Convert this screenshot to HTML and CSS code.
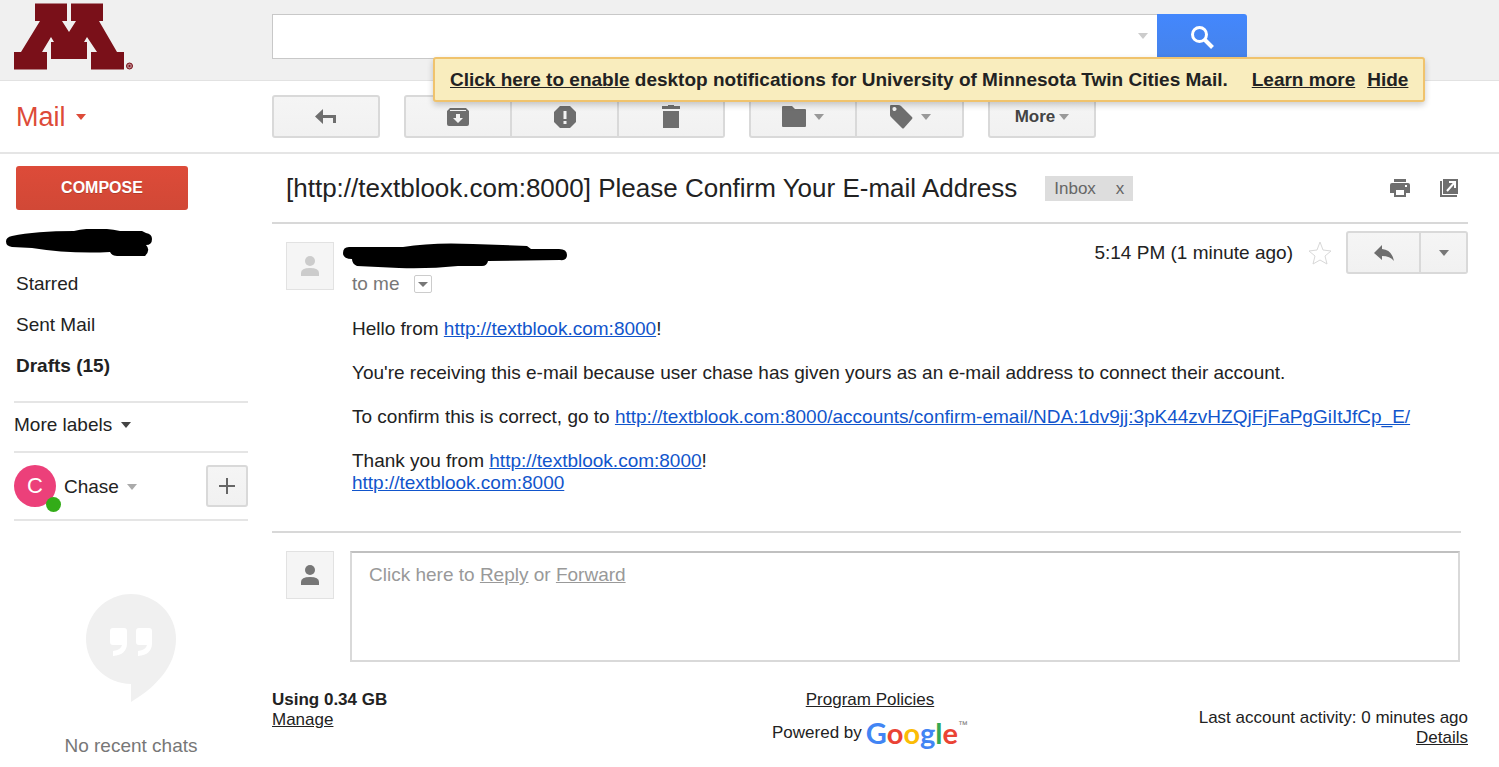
FILE: index.html
```html
<!DOCTYPE html>
<html lang="en">
<head>
<meta charset="utf-8">
<meta name="viewport" content="width=device-width, initial-scale=1">
<title>University of Minnesota Twin Cities Mail</title>
<link rel="stylesheet" href="styles.css">
</head>
<body>
<header class="topbar">
  <a class="brand" href="#" aria-label="University of Minnesota">
    <svg width="120" height="68" viewBox="0 0 120 68" aria-hidden="true">
      <path fill="#7a1019" d="M21 0.500h32v17.500h-5l7 11 7-11h-5V0.500h32v17.500h-4l18 31h7v17.500H77V49h6L73 34l-3 5h3v17H37V39h3l-3-5-9 15h5v17.500H0V49h7L26 18h-5z"/>
      <circle cx="115.500" cy="63" r="3" fill="#b98288" stroke="#7a1019"/>
      <circle cx="115.500" cy="63" r="1" fill="#7a1019"/>
    </svg>
  </a>
  <form class="search">
    <input class="search-input" type="text" aria-label="Search mail">
    <button class="search-options" type="button" aria-label="Search options"><span class="caret caret-light"></span></button>
    <button class="search-go" type="button" aria-label="Search">
      <svg width="24" height="24" viewBox="0 0 24 24" fill="none" stroke="#fff" aria-hidden="true"><circle cx="9.500" cy="9.500" r="7" stroke-width="3"/><path stroke-width="4" d="m14.500 14.500 8 8"/></svg>
    </button>
  </form>
  <div class="notice" role="status">
    <span><a href="#">Click here to enable</a> desktop notifications for University of Minnesota Twin Cities Mail.</span>
    <a class="notice-learn" href="#">Learn more</a>
    <a class="notice-hide" href="#">Hide</a>
  </div>
</header>

<div class="toolbar">
  <button class="app-switch" type="button">Mail <span class="caret caret-red"></span></button>
  <div class="actions">
    <div class="group">
      <button class="tool" type="button" aria-label="Back to inbox">
        <svg width="22" height="16" viewBox="0 0 22 16" aria-hidden="true"><path fill="#6e6e6e" d="M8 0v6h13v8h-3V9H8v6L0 7.500z"/></svg>
      </button>
    </div>
    <div class="group">
      <button class="tool" type="button" aria-label="Archive">
        <svg width="22" height="20" viewBox="0 0 22 20" aria-hidden="true"><path fill="#6e6e6e" fill-rule="evenodd" d="M3 1h16l3 3v13q0 2-2 2H2q-2 0-2-2V4zm0 2v1h16V3zm6 4v4H6l5 5 5-5h-3V7z"/></svg>
      </button>
      <button class="tool" type="button" aria-label="Report spam">
        <svg width="22" height="22" viewBox="0 0 22 22" aria-hidden="true"><path fill="#6e6e6e" d="M6 0h10l6 6v10l-6 6H6l-6-6V6z"/><path stroke="#f3f3f3" stroke-width="3" d="M11 5v8m0 2v3"/></svg>
      </button>
      <button class="tool" type="button" aria-label="Delete">
        <svg width="20" height="24" viewBox="0 0 20 24" aria-hidden="true"><path fill="#6e6e6e" d="M1 1h6V0h6v1h6v3H1zm1 5h16v17H2z"/></svg>
      </button>
    </div>
    <div class="group">
      <button class="tool" type="button" aria-label="Move to">
        <svg width="24" height="22" viewBox="0 0 24 22" aria-hidden="true"><path fill="#6e6e6e" d="M1 0h9l3 3h10q1 0 1 1v16q0 1-1 1H1q-1 0-1-1V1q0-1 1-1z"/></svg>
        <span class="caret caret-gray"></span>
      </button>
      <button class="tool" type="button" aria-label="Labels">
        <svg width="24" height="24" viewBox="0 0 24 24" aria-hidden="true"><path fill="#6e6e6e" fill-rule="evenodd" d="M2 0h7q2 0 3 1l11 11q1 1 0 2l-8 9q-1 1-2 0L2 12q-1-1-1-2V1q0-1 1-1zm3 2a2 2 0 1 0 1 4 2 2 0 0 0-1-4z"/></svg>
        <span class="caret caret-gray"></span>
      </button>
    </div>
    <div class="group">
      <button class="tool tool-more" type="button">More <span class="caret caret-gray"></span></button>
    </div>
  </div>
</div>

<div class="layout">
  <aside class="sidebar">
    <button class="compose" type="button">COMPOSE</button>
    <nav class="folders" aria-label="Folders">
      <a class="folder folder-hidden" href="#" aria-label="Inbox">
        <svg width="148" height="30" viewBox="0 0 148 30" aria-hidden="true"><path fill="#000" d="M6 7Q30 2 68 2 90-3 114 2h22l4 2q6 1 6 6 0 6-6 6 5 5-1 11h-28q-5 0-7-4-40 2-78-4L6 18q-6-1-6-5.500T6 7z"/></svg>
      </a>
      <a class="folder" href="#">Starred</a>
      <a class="folder" href="#">Sent Mail</a>
      <a class="folder folder-bold" href="#">Drafts (15)</a>
    </nav>
    <button class="more-labels" type="button">More labels <span class="caret caret-dark"></span></button>
    <div class="profile">
      <span class="face">C<span class="presence"></span></span>
      <button class="profile-name" type="button">Chase <span class="caret caret-soft"></span></button>
      <button class="add" type="button" aria-label="New conversation">
        <svg width="18" height="18" viewBox="0 0 18 18" aria-hidden="true"><path stroke="#666" stroke-width="2" d="M9 1v16M1 9h16"/></svg>
      </button>
    </div>
    <div class="chats">
      <svg width="90" height="108" viewBox="0 0 90 108" aria-hidden="true"><path fill="#f0f0f0" d="M45 0a45 45 0 0 1 45 45c0 27-20 48-45 63V90A45 45 0 0 1 45 0z"/><path fill="#fff" d="M27 34h11q3 0 3 3v12q0 12-14 13v-5q8-1 9-6h-9q-3 0-3-3V37q0-3 3-3zm26 0h10q3 0 3 3v12q0 12-14 13v-5q8-1 9-6h-8q-3 0-3-3V37q0-3 3-3z"/></svg>
      <p class="chats-text">No recent chats</p>
    </div>
  </aside>

  <main class="main">
    <div class="subject">
      <h1 class="subject-text">[http://textblook.com:8000] Please Confirm Your E-mail Address</h1>
      <span class="tag">Inbox <button class="tag-x" type="button" aria-label="Remove label Inbox">x</button></span>
      <div class="subject-tools">
        <button class="icon-btn" type="button" aria-label="Print">
          <svg width="22" height="20" viewBox="0 0 22 20" aria-hidden="true"><path fill="#6e6e6e" fill-rule="evenodd" d="M5 1h12v3H5zM3 5h16q2 0 2 2v8h-4v4H5v-4H1V7q0-2 2-2zm4 7v5h8v-5zm11-5h-2v2h2z"/></svg>
        </button>
        <button class="icon-btn" type="button" aria-label="Open in new window">
          <svg width="20" height="20" viewBox="0 0 20 20" aria-hidden="true"><path fill="#6e6e6e" d="M4 1h15v15H4z"/><path fill="none" stroke="#6e6e6e" stroke-width="2" d="M2 3v15h16"/><path fill="none" stroke="#fff" stroke-width="2" d="M10 4h6v6m0-6-8 9"/></svg>
        </button>
      </div>
    </div>

    <article class="message">
      <span class="avatar">
        <svg width="20" height="22" viewBox="0 0 20 22" aria-hidden="true"><g fill="#ccc"><circle cx="10" cy="6" r="5"/><path d="M1 21v-3q0-5 9-5t9 5v3z"/></g></svg>
      </span>
      <div class="message-content">
        <div class="message-head">
          <div class="sender">
            <svg class="sender-mark" width="224" height="26" viewBox="0 0 224 26" aria-hidden="true"><path fill="#000" d="M6 4h54Q90-1 130 1l54 2 4 3h28q8 0 8 6t-7 5l-72 1q-1 5-6 5h-24Q86 26 56 25L14 23q-5-2-5-7-9 0-9-6t6-6z"/></svg>
            <div class="recipient">to me <button class="details" type="button" aria-label="Show details"><span class="caret caret-small"></span></button></div>
          </div>
          <div class="meta">
            <time>5:14 PM (1 minute ago)</time>
            <button class="icon-btn star" type="button" aria-label="Star">
              <svg width="24" height="24" viewBox="0 0 24 24" fill="none" stroke="#d8d8d8" aria-hidden="true"><path d="m12 1 3 8 8 1-6 5 2 8-7-4-7 4 2-8-6-5 8-1z"/></svg>
            </button>
            <div class="group">
              <button class="tool tool-reply" type="button" aria-label="Reply">
                <svg width="20" height="18" viewBox="0 0 20 18" aria-hidden="true"><path fill="#6e6e6e" d="M8 1v4q10 1 12 12-4-5-12-5v4L0 9z"/></svg>
              </button>
              <button class="tool tool-drop" type="button" aria-label="More options"><span class="caret caret-mid"></span></button>
            </div>
          </div>
        </div>
        <div class="body-text">
          <p>Hello from <a href="#">http://textblook.com:8000</a>!</p>
          <p>You're receiving this e-mail because user chase has given yours as an e-mail address to connect their account.</p>
          <p>To confirm this is correct, go to <a href="#">http://textblook.com:8000/accounts/confirm-email/NDA:1dv9jj:3pK44zvHZQjFjFaPgGiItJfCp_E/</a></p>
          <p>Thank you from <a href="#">http://textblook.com:8000</a>!<br><a href="#">http://textblook.com:8000</a></p>
        </div>
      </div>
    </article>

    <section class="reply">
      <span class="avatar">
        <svg width="20" height="22" viewBox="0 0 20 22" aria-hidden="true"><g fill="#777"><circle cx="10" cy="6" r="5"/><path d="M1 21v-3q0-5 9-5t9 5v3z"/></g></svg>
      </span>
      <div class="reply-box">Click here to <a href="#">Reply</a> or <a href="#">Forward</a></div>
    </section>

    <footer class="footer">
      <div class="storage"><strong>Using 0.34 GB</strong><a href="#">Manage</a></div>
      <div class="policies">
        <a href="#">Program Policies</a>
        <div class="powered">Powered by <span class="google"><span class="g-blue">G</span><span class="g-red">o</span><span class="g-yellow">o</span><span class="g-blue">g</span><span class="g-green">l</span><span class="g-red">e</span></span><span class="tm">™</span></div>
      </div>
      <div class="activity"><span>Last account activity: 0 minutes ago</span><a href="#">Details</a></div>
    </footer>
  </main>
</div>
</body>
</html>
```
FILE: styles.css
```css
* { box-sizing: border-box; }
body {
  margin: 0;
  background: #fff;
  color: #222;
  font: 19px/22px "Liberation Sans", Arial, sans-serif;
}
button { margin: 0; padding: 0; border: 0; background: none; color: inherit; font: inherit; }
a { color: inherit; }
p { margin: 0; }
svg { display: block; flex: none; }

.caret { display: inline-block; flex: none; border: solid transparent; border-width: 6px 5px 0; border-top-color: #777; }
.caret-light { border-top-color: #ccc; }
.caret-red { border-top-color: #dd4b39; }
.caret-gray { border-top-color: #999; }
.caret-dark { border-top-color: #444; }
.caret-soft { border-top-color: #aaa; }
.caret-small { border-width: 5px 5px 0; }

.topbar {
  position: relative;
  display: flex;
  height: 81px;
  background: #f0f0f0;
  border-bottom: 1px solid #e2e2e2;
}
.brand { flex: none; width: 272px; padding: 3px 0 0 14px; }
.search { position: relative; display: flex; width: 975px; height: 45px; margin-top: 14px; }
.search-input {
  flex: 1;
  min-width: 0;
  padding: 0 40px 0 12px;
  border: 1px solid #c8c8c8;
  border-right: 0;
  background: #fff;
  font: inherit;
}
.search-options { position: absolute; right: 93px; top: 10px; display: flex; padding: 9px 6px; }
.search-go {
  display: flex;
  align-items: center;
  justify-content: center;
  width: 90px;
  border-radius: 0 3px 3px 0;
  background: linear-gradient(#4387fd, #4683ea);
}
.notice {
  position: absolute;
  top: 57px;
  left: 433px;
  display: flex;
  align-items: center;
  height: 45px;
  padding: 0 15px;
  border: 2px solid #f0c36d;
  border-radius: 3px;
  background: #f9edbe;
  box-shadow: 0 3px 6px rgba(0, 0, 0, .2);
  font-weight: bold;
  white-space: nowrap;
}
.notice-learn { margin-left: 24px; }
.notice-hide { margin-left: 12px; }

.toolbar { display: flex; height: 73px; border-bottom: 2px solid #e5e5e5; }
.app-switch {
  display: flex;
  flex: none;
  align-items: center;
  gap: 10px;
  width: 272px;
  padding-left: 16px;
  color: #dd4b39;
  font-size: 27px;
}
.actions { display: flex; gap: 24px; padding-top: 14px; }
.group { display: flex; height: 43px; }
.tool {
  display: flex;
  align-items: center;
  justify-content: center;
  gap: 8px;
  width: 108px;
  border: 2px solid #d9d9d9;
  background: linear-gradient(#f5f5f5, #f1f1f1);
}
.tool + .tool { width: 107px; border-left: 0; }
.tool + .tool + .tool { width: 106px; }
.tool:first-child { border-radius: 3px 0 0 3px; }
.tool:last-child { border-radius: 0 3px 3px 0; }
.tool:only-child { border-radius: 3px; }
.tool-more { gap: 4px; color: #444; font-size: 17px; font-weight: bold; }

.layout { display: flex; padding-right: 31px; }
.sidebar { flex: none; width: 248px; margin-right: 24px; padding-top: 12px; }
.compose {
  display: block;
  width: 172px;
  height: 44px;
  margin-left: 16px;
  border-radius: 3px;
  background: linear-gradient(#dd4b39, #d14836);
  color: #fff;
  font-size: 16px;
  font-weight: bold;
  text-shadow: 0 1px rgba(0, 0, 0, .2);
}
.folders { margin: 12px 0 15px; }
.folder { display: block; padding-left: 16px; line-height: 41px; text-decoration: none; }
.folder-hidden { height: 41px; padding: 7px 0 0 6px; }
.folder-bold { font-weight: bold; }
.more-labels {
  display: flex;
  align-items: center;
  gap: 9px;
  width: 234px;
  height: 52px;
  margin-left: 14px;
  padding-bottom: 5px;
  border: solid #e5e5e5;
  border-width: 2px 0;
}
.profile {
  display: flex;
  align-items: center;
  height: 68px;
  margin-left: 14px;
  border-bottom: 2px solid #e5e5e5;
}
.face {
  position: relative;
  width: 42px;
  height: 42px;
  border-radius: 50%;
  background: #ec407a;
  color: #fff;
  font-size: 22px;
  line-height: 42px;
  text-align: center;
}
.presence { position: absolute; right: -5px; bottom: -5px; width: 15px; height: 15px; border-radius: 50%; background: #33ac18; }
.profile-name { display: flex; align-items: center; gap: 8px; margin-left: 8px; padding-top: 2px; }
.add {
  display: flex;
  align-items: center;
  justify-content: center;
  width: 42px;
  height: 42px;
  margin-left: auto;
  border: 2px solid #d9d9d9;
  border-radius: 3px;
  background: linear-gradient(#f5f5f5, #f1f1f1);
}
.chats { display: flex; flex-direction: column; align-items: center; padding: 73px 0 0 14px; }
.chats-text { margin-top: 33px; color: #777; }

.main { flex: 1; min-width: 0; }
.subject {
  display: flex;
  align-items: center;
  height: 70px;
  padding: 0 9px 0 14px;
  border-bottom: 2px solid #d8d8d8;
}
.subject-text { margin: 0; font-size: 26px; font-weight: normal; line-height: 32px; }
.tag {
  display: flex;
  gap: 20px;
  margin-left: 28px;
  padding: 0 9px;
  background: #ddd;
  color: #666;
  font-size: 17px;
  line-height: 25px;
}
.subject-tools { display: flex; gap: 28px; margin-left: auto; }

.message {
  display: flex;
  gap: 18px;
  margin-right: 7px;
  padding: 7px 0 37px 14px;
  border-bottom: 2px solid #d8d8d8;
}
.avatar {
  display: flex;
  flex: none;
  align-items: center;
  justify-content: center;
  width: 48px;
  height: 48px;
  border: 1px solid #e2e2e2;
  background: #f5f5f5;
}
.message .avatar { margin-top: 11px; }
.message-content { flex: 1; min-width: 0; }
.message-head { display: flex; justify-content: space-between; height: 87px; margin-right: -7px; }
.sender { padding-top: 12px; }
.sender-mark { margin-left: -9px; }
.recipient { display: flex; align-items: center; gap: 14px; margin-top: 4px; color: #777; }
.details { display: flex; align-items: center; justify-content: center; width: 18px; height: 18px; border: 1px solid #ccc; border-radius: 2px; }
.meta { display: flex; align-items: center; height: 43px; }
.star { margin: 0 14px 0 15px; }
.tool-reply { width: 75px; }
.tool-reply + .tool-drop { width: 47px; }
.body-text p { margin-bottom: 22px; }
.body-text p:last-child { margin-bottom: 0; }
.body-text a { color: #15c; }

.reply { display: flex; gap: 16px; margin-right: 8px; padding: 18px 0 0 14px; }
.reply-box {
  flex: 1;
  height: 111px;
  padding: 11px 17px;
  border: 2px solid #d9d9d9;
  border-top-color: #c0c0c0;
  color: #999;
}

.footer {
  display: grid;
  grid-template-columns: 1fr auto 1fr;
  padding-top: 28px;
  font-size: 17px;
  line-height: 20px;
}
.storage { display: flex; flex-direction: column; align-items: flex-start; }
.policies { display: flex; flex-direction: column; align-items: center; }
.powered { display: flex; align-items: center; height: 46px; }
.google { margin-left: 4px; font: bold 29px/40px Lato, sans-serif; }
.tm { align-self: flex-start; margin-top: 7px; color: #777; font-size: 10px; line-height: 16px; }
.g-blue { color: #4285f4; }
.g-red { color: #ea4335; }
.g-yellow { color: #fbbc05; }
.g-green { color: #34a853; }
.activity { display: flex; flex-direction: column; align-items: flex-end; padding-top: 18px; }
```
